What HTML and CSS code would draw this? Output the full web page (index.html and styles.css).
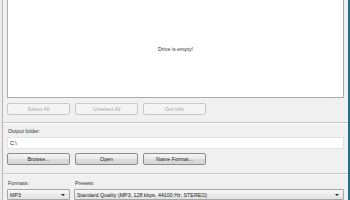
FILE: index.html
```html
<!DOCTYPE html>
<html>
<head>
<meta charset="utf-8">
<link rel="stylesheet" href="styles.css">
</head>
<body>
<div class="window">
  <div class="content">
    <div class="list"><span class="empty">Drive is empty!</span></div>
    <div class="btnrow first">
      <div class="btn disabled">Select All</div>
      <div class="btn disabled">Unselect All</div>
      <div class="btn disabled">Get Info</div>
    </div>
  </div>
  <div class="sep first-sep"></div>
  <div class="content">
    <div class="label">Output folder:</div>
    <div class="field">C:\</div>
    <div class="btnrow second">
      <div class="btn">Browse...</div>
      <div class="btn">Open</div>
      <div class="btn">Name Format...</div>
    </div>
  </div>
  <div class="sep second-sep"></div>
  <div class="content bottom">
    <div class="col formats">
      <div class="label">Formats:</div>
      <div class="combo"><span>MP3</span><i class="arrow"></i></div>
    </div>
    <div class="col presets">
      <div class="label">Presets:</div>
      <div class="combo"><span>Standard Quality (MP3, 128 kbps, 44100 Hz, STEREO)</span><i class="arrow"></i></div>
    </div>
  </div>
</div>
</body>
</html>
```

FILE: styles.css
```css
html, body {
  margin: 0;
  padding: 0;
  background: #ececec;
  width: 350px;
  height: 200px;
  overflow: hidden;
  font-family: "Liberation Sans", Arial, sans-serif;
  font-size: 5.3px;
  color: #222;
}
.window {
  margin-left: 2px;
  width: 348px;
  height: 200px;
  box-sizing: border-box;
  border-left: 1px solid #b8b8b8;
  border-right: 2px solid #2b6988;
  background: #f0f0f0;
}
.content {
  padding: 0 4px;
}
.list {
  height: 98px;
  box-sizing: border-box;
  background: #fff;
  border: 1px solid #a9abb0;
  border-top: 0;
  display: flex;
  align-items: center;
  justify-content: center;
}
.empty {
  margin-top: 0;
  color: #333;
}
.btnrow {
  display: flex;
  gap: 5px;
}
.btnrow.first { margin-top: 5px; }
.btnrow.second { margin-top: 4px; }
.btn {
  width: 63px;
  height: 12px;
  box-sizing: border-box;
  border: 1px solid #8c8c8c;
  border-radius: 2px;
  background: linear-gradient(#f6f6f6, #e9e9e9 50%, #dcdcdc 51%, #d6d6d6);
  display: flex;
  align-items: center;
  justify-content: center;
  color: #222;
}
.btn.disabled {
  border-color: #c8c8c8;
  background: #f4f4f4;
  color: #a6a6a6;
}
.sep {
  height: 0;
  border-top: 1px solid #c9c9c9;
  border-bottom: 1px solid #fbfbfb;
}
.first-sep { margin-top: 7px; }
.second-sep { margin-top: 8px; }
.label {
  height: 8px;
  line-height: 8px;
  padding-left: 1px;
  color: #333;
}
.content > .label { margin-top: 3px; }
.field {
  margin-top: 2px;
  height: 12px;
  box-sizing: border-box;
  background: #fff;
  border: 1px solid #e2e3e6;
  padding-left: 2px;
  line-height: 10px;
}
.bottom {
  display: flex;
  gap: 4px;
}
.col .label { margin-top: 4px; }
.formats { width: 63px; }
.presets { flex: 1; }
.combo {
  margin-top: 2px;
  height: 11px;
  box-sizing: border-box;
  border: 1px solid #a6a6a6;
  border-radius: 1px;
  background: linear-gradient(#f8f8f8, #ececec 50%, #e0e0e0);
  display: flex;
  align-items: center;
  padding: 0 3px 0 2px;
}
.combo span { flex: 1; white-space: nowrap; overflow: hidden; }
.arrow {
  width: 0;
  height: 0;
  border-left: 2px solid transparent;
  border-right: 2px solid transparent;
  border-top: 2px solid #222;
  margin-right: 1px;
}
```
